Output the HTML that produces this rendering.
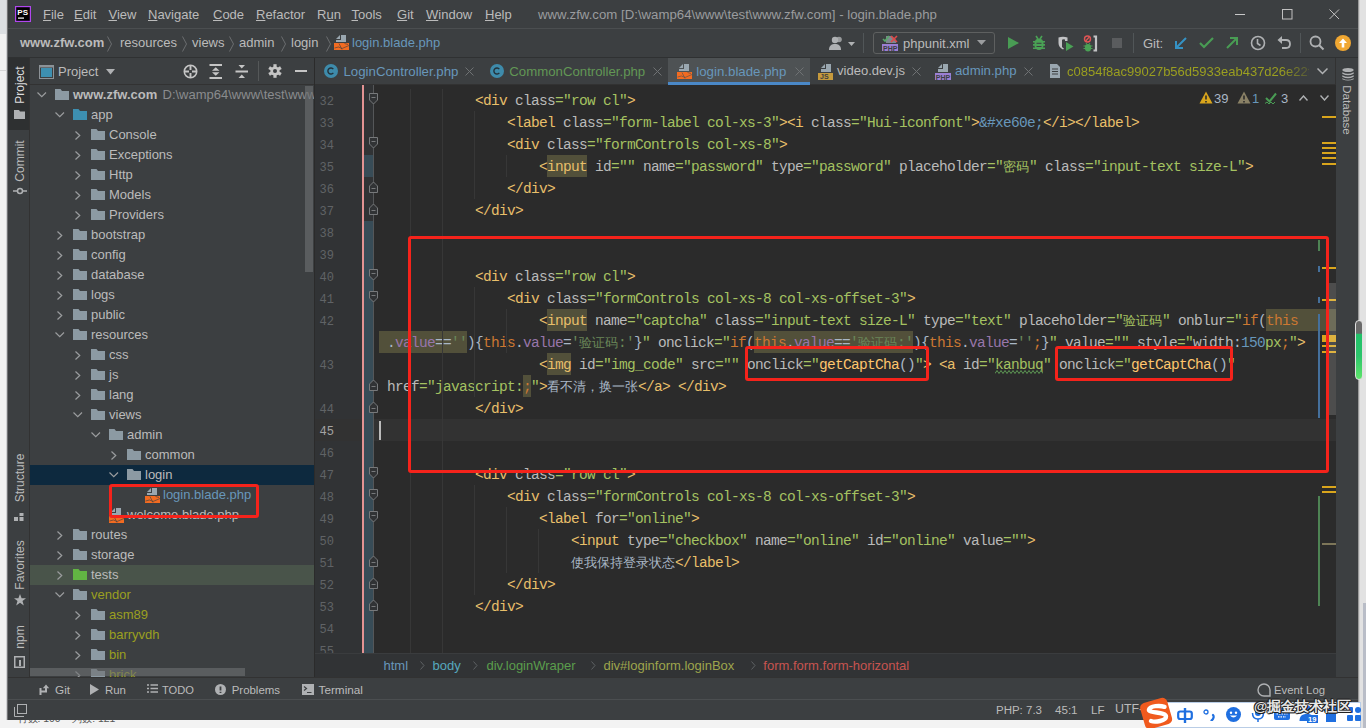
<!DOCTYPE html><html><head><meta charset="utf-8"><style>
html,body{margin:0;padding:0}
body{width:1366px;height:728px;overflow:hidden;position:relative;background:#e9eaec;font-family:"Liberation Sans", sans-serif}
.a{position:absolute}
.t{white-space:pre}
.cd{font-family:"Liberation Mono",monospace;font-size:14.5px;letter-spacing:-0.7px;line-height:22px;padding-top:1.1px}
.ln{font-family:"Liberation Mono",monospace;font-size:12px;line-height:22px;text-align:right;padding-top:2px}
.cj{font-size:13px;line-height:22px;padding-top:1px}
</style></head><body>
<div class="a" style="left:0px;top:0px;width:8px;height:728px;background:#f1f1f1;"></div><div class="a" style="left:0px;top:0px;width:8px;height:34px;background:#dcdfe2;"></div><div class="a" style="left:0px;top:70px;width:8px;height:1px;background:#d6d6d6;"></div><div class="a" style="left:0px;top:720px;width:1366px;height:8px;background:#f3f3f3;"></div><div class="a" style="left:1358px;top:0px;width:8px;height:728px;background:#e2e2e2;"></div><div class="a" style="left:1358px;top:0px;width:1px;height:728px;background:#9a9a9a;"></div><div class="a" style="left:1359px;top:0px;width:1px;height:728px;background:#cfcfcf;"></div><div class="a" style="left:1363px;top:603px;width:3px;height:125px;background:#b9bdc7;"></div><div class="a" style="left:8px;top:0px;width:1350px;height:720px;background:#3c3f41;"></div><div class="a" style="left:7px;top:0px;width:1px;height:720px;background:#707173;"></div><div class="a" style="left:6px;top:0px;width:1px;height:720px;background:#d0d1d3;"></div><div class="a" style="left:8px;top:28px;width:1350px;height:1px;background:#4b4e50;"></div><svg class="a" style="left:15px;top:6px;" width="16" height="16" viewBox="0 0 16 16"><rect x="0.6" y="0.6" width="14.8" height="14.8" fill="#000" stroke="#b047ee" stroke-width="1.2"/><text x="2.3" y="9" font-family="Liberation Sans" font-weight="bold" font-size="8" fill="#fff">PS</text><rect x="3" y="11.5" width="6" height="1.2" fill="#fff"/></svg><div class="a t" style="left:43px;top:6.50px;line-height:16px;font-size:13px;color:#bbbbbb;font-weight:normal;font-family:"Liberation Sans", sans-serif;text-underline-offset:1.5px;"><u>F</u>ile</div><div class="a t" style="left:74px;top:6.50px;line-height:16px;font-size:13px;color:#bbbbbb;font-weight:normal;font-family:"Liberation Sans", sans-serif;text-underline-offset:1.5px;"><u>E</u>dit</div><div class="a t" style="left:108.5px;top:6.50px;line-height:16px;font-size:13px;color:#bbbbbb;font-weight:normal;font-family:"Liberation Sans", sans-serif;text-underline-offset:1.5px;"><u>V</u>iew</div><div class="a t" style="left:148px;top:6.50px;line-height:16px;font-size:13px;color:#bbbbbb;font-weight:normal;font-family:"Liberation Sans", sans-serif;text-underline-offset:1.5px;"><u>N</u>avigate</div><div class="a t" style="left:213px;top:6.50px;line-height:16px;font-size:13px;color:#bbbbbb;font-weight:normal;font-family:"Liberation Sans", sans-serif;text-underline-offset:1.5px;"><u>C</u>ode</div><div class="a t" style="left:256px;top:6.50px;line-height:16px;font-size:13px;color:#bbbbbb;font-weight:normal;font-family:"Liberation Sans", sans-serif;text-underline-offset:1.5px;"><u>R</u>efactor</div><div class="a t" style="left:317px;top:6.50px;line-height:16px;font-size:13px;color:#bbbbbb;font-weight:normal;font-family:"Liberation Sans", sans-serif;text-underline-offset:1.5px;">R<u>u</u>n</div><div class="a t" style="left:351.5px;top:6.50px;line-height:16px;font-size:13px;color:#bbbbbb;font-weight:normal;font-family:"Liberation Sans", sans-serif;text-underline-offset:1.5px;"><u>T</u>ools</div><div class="a t" style="left:397px;top:6.50px;line-height:16px;font-size:13px;color:#bbbbbb;font-weight:normal;font-family:"Liberation Sans", sans-serif;text-underline-offset:1.5px;"><u>G</u>it</div><div class="a t" style="left:426px;top:6.50px;line-height:16px;font-size:13px;color:#bbbbbb;font-weight:normal;font-family:"Liberation Sans", sans-serif;text-underline-offset:1.5px;"><u>W</u>indow</div><div class="a t" style="left:485px;top:6.50px;line-height:16px;font-size:13px;color:#bbbbbb;font-weight:normal;font-family:"Liberation Sans", sans-serif;text-underline-offset:1.5px;"><u>H</u>elp</div><div class="a t" style="left:538px;top:5.92px;line-height:17px;font-size:13.22px;color:#9a9c9e;font-weight:normal;font-family:"Liberation Sans", sans-serif;">www.zfw.com [D:\wamp64\www\test\www.zfw.com] - login.blade.php</div><div class="a" style="left:1235px;top:14px;width:10px;height:1px;background:#c8c8c8;"></div><svg class="a" style="left:1282px;top:9px;" width="11" height="11" viewBox="0 0 11 11"><rect x="0.5" y="0.5" width="9.5" height="9.5" fill="none" stroke="#c0c0c0" stroke-width="1"/></svg><svg class="a" style="left:1329px;top:9px;" width="11" height="11" viewBox="0 0 11 11"><path d="M0.5 0.5L10 10M10 0.5L0.5 10" stroke="#c0c0c0" stroke-width="1"/></svg><div class="a" style="left:8px;top:57px;width:1350px;height:1px;background:#2f3132;"></div><div class="a t" style="left:20px;top:34.50px;line-height:16px;font-size:13px;color:#bbbbbb;font-weight:bold;font-family:"Liberation Sans", sans-serif;">www.zfw.com</div><svg class="a" style="left:107px;top:36px;" width="6" height="16" viewBox="0 0 6 16"><path d="M0.5 0.5L4.5 8L0.5 15.5" fill="none" stroke="#6b6e70" stroke-width="1"/></svg><svg class="a" style="left:182px;top:36px;" width="6" height="16" viewBox="0 0 6 16"><path d="M0.5 0.5L4.5 8L0.5 15.5" fill="none" stroke="#6b6e70" stroke-width="1"/></svg><svg class="a" style="left:229px;top:36px;" width="6" height="16" viewBox="0 0 6 16"><path d="M0.5 0.5L4.5 8L0.5 15.5" fill="none" stroke="#6b6e70" stroke-width="1"/></svg><svg class="a" style="left:281px;top:36px;" width="6" height="16" viewBox="0 0 6 16"><path d="M0.5 0.5L4.5 8L0.5 15.5" fill="none" stroke="#6b6e70" stroke-width="1"/></svg><svg class="a" style="left:326px;top:36px;" width="6" height="16" viewBox="0 0 6 16"><path d="M0.5 0.5L4.5 8L0.5 15.5" fill="none" stroke="#6b6e70" stroke-width="1"/></svg><div class="a t" style="left:120px;top:34.50px;line-height:16px;font-size:13px;color:#bbbbbb;font-weight:normal;font-family:"Liberation Sans", sans-serif;">resources</div><div class="a t" style="left:192px;top:34.50px;line-height:16px;font-size:13px;color:#bbbbbb;font-weight:normal;font-family:"Liberation Sans", sans-serif;">views</div><div class="a t" style="left:239px;top:34.50px;line-height:16px;font-size:13px;color:#bbbbbb;font-weight:normal;font-family:"Liberation Sans", sans-serif;">admin</div><div class="a t" style="left:291px;top:34.50px;line-height:16px;font-size:13px;color:#bbbbbb;font-weight:normal;font-family:"Liberation Sans", sans-serif;">login</div><svg class="a" style="left:334px;top:35px;" width="16" height="16" viewBox="0 0 16 16"><path d="M2 4L6 0V4Z" fill="#9aa7b0"/><path d="M7 0H12V7H2V5H7Z" fill="#9aa7b0"/><rect x="0" y="8" width="15" height="7" fill="#f26b21"/><path d="M0.5 13L4.5 12L8 13.5L15 10.5" fill="none" stroke="#3c3f41" stroke-width="0.8" opacity="0.8"/><path d="M5 8.5L8 14.5M10.5 8.5L14 9.5" fill="none" stroke="#3c3f41" stroke-width="0.8" opacity="0.8"/></svg><div class="a t" style="left:352px;top:34.50px;line-height:16px;font-size:13px;color:#6897bb;font-weight:normal;font-family:"Liberation Sans", sans-serif;">login.blade.php</div><svg class="a" style="left:829px;top:36px;" width="28" height="16" viewBox="0 0 28 16"><circle cx="6" cy="4" r="3.2" fill="#afb1b3"/><path d="M0 14C0 9 3 8 6 8C9 8 12 9 12 14Z" fill="#afb1b3"/><circle cx="10" cy="3.5" r="2.8" fill="#afb1b3" opacity="0.8"/><path d="M19 6H26L22.5 10Z" fill="#afb1b3"/></svg><div class="a" style="left:863px;top:33px;width:1px;height:20px;background:#515658;"></div><div class="a" style="left:873px;top:32px;width:120px;height:20px;border:1px solid #5e6060;border-radius:3px;"></div><svg class="a" style="left:882px;top:35px;" width="17" height="17" viewBox="0 0 17 17"><path d="M4 1H10L14 5V8H4Z" fill="#9aa7b0" opacity="0.7"/><rect x="0" y="9" width="16" height="7" fill="#9b7fd4"/><text x="1" y="15.5" font-family="Liberation Sans" font-weight="bold" font-size="7" fill="#3c3f41">PHP</text><path d="M1 4L3 6L7 1" fill="none" stroke="#59a869" stroke-width="1.6"/><path d="M9 1L15 7M15 1L9 7" stroke="#e04848" stroke-width="1.6"/></svg><div class="a t" style="left:903px;top:35.50px;line-height:16px;font-size:13px;color:#bbbbbb;font-weight:normal;font-family:"Liberation Sans", sans-serif;">phpunit.xml</div><svg class="a" style="left:977px;top:40px;" width="9" height="6" viewBox="0 0 9 6"><path d="M0 0H9L4.5 5Z" fill="#9b9d9f"/></svg><svg class="a" style="left:1008px;top:37px;" width="11" height="12" viewBox="0 0 11 12"><path d="M0 0L11 6L0 12Z" fill="#499c54"/></svg><svg class="a" style="left:1032px;top:35px;" width="14" height="16" viewBox="0 0 14 16"><path d="M4 1L6 4M10 1L8 4" stroke="#4aa155" stroke-width="1.6"/><rect x="2.5" y="3.5" width="9" height="11.5" rx="4.5" fill="#4aa155"/><path d="M1 6.7H13M1 9.9H13M1 13.3H13" stroke="#4aa155" stroke-width="1.6"/><path d="M4.5 8.3H9.5M4.5 11.5H9.5" stroke="#3c3f41" stroke-width="1"/></svg><svg class="a" style="left:1058px;top:36px;" width="16" height="16" viewBox="0 0 16 16"><path d="M0.5 1.5Q5 0 9.5 1.5V5H7V3.5Q5 3 4 3.8V11L6 12.8L5 13.5Q0.5 11 0.5 7Z" fill="#c2c3c5"/><path d="M8 6L15.5 10.5L8 15Z" fill="#4aa155"/></svg><svg class="a" style="left:1083px;top:35px;" width="16" height="17" viewBox="0 0 16 17"><circle cx="4.5" cy="4" r="3" fill="none" stroke="#e05555" stroke-width="1.4"/><path d="M2.7 6L6.3 2" stroke="#e05555" stroke-width="1.2"/><path d="M3 8L4 9.5M7 8L6 9.5" stroke="#4aa155" stroke-width="1"/><rect x="2" y="9" width="6" height="7.5" rx="3" fill="#4aa155"/><path d="M0.5 11H9.5M0.5 13.5H9.5" stroke="#4aa155" stroke-width="1.2"/><path d="M10.5 1.5H13V15.5H10.5" fill="none" stroke="#c2c3c5" stroke-width="2.2"/></svg><div class="a" style="left:1112px;top:38px;width:10px;height:10px;background:#5a5c5e;"></div><div class="a" style="left:1133px;top:33px;width:1px;height:20px;background:#515658;"></div><div class="a t" style="left:1143px;top:35.50px;line-height:16px;font-size:13px;color:#bbbbbb;font-weight:normal;font-family:"Liberation Sans", sans-serif;">Git:</div><svg class="a" style="left:1174px;top:36px;" width="14" height="14" viewBox="0 0 14 14"><path d="M12 2L2 12M2 5V12H9" fill="none" stroke="#3592c4" stroke-width="2"/></svg><svg class="a" style="left:1199px;top:37px;" width="15" height="12" viewBox="0 0 15 12"><path d="M1 6L5 10L14 1" fill="none" stroke="#499c54" stroke-width="2.2"/></svg><svg class="a" style="left:1225px;top:36px;" width="14" height="14" viewBox="0 0 14 14"><path d="M2 12L12 2M5 2H12V9" fill="none" stroke="#499c54" stroke-width="2"/></svg><svg class="a" style="left:1250px;top:35px;" width="16" height="16" viewBox="0 0 16 16"><circle cx="8" cy="8" r="6.5" fill="none" stroke="#afb1b3" stroke-width="1.6"/><path d="M7.5 4V8.5L10.5 10.5" fill="none" stroke="#afb1b3" stroke-width="1.6"/></svg><svg class="a" style="left:1277px;top:35px;" width="15" height="15" viewBox="0 0 15 15"><path d="M3 5H9C12 5 13 7 13 9C13 11 12 13 9 13H5" fill="none" stroke="#afb1b3" stroke-width="1.8"/><path d="M0.5 5L5 1V9Z" fill="#afb1b3"/></svg><div class="a" style="left:1300px;top:33px;width:1px;height:20px;background:#515658;"></div><svg class="a" style="left:1309px;top:35px;" width="16" height="16" viewBox="0 0 16 16"><circle cx="6.5" cy="6.5" r="5" fill="none" stroke="#afb1b3" stroke-width="1.8"/><path d="M10 10L14.5 14.5" stroke="#afb1b3" stroke-width="2"/></svg><svg class="a" style="left:1335px;top:35px;" width="16" height="16" viewBox="0 0 16 16"><circle cx="8" cy="8" r="8" fill="#f0a732"/><path d="M8 3.5L12 8H9.3V12.5H6.7V8H4Z" fill="#fff"/></svg><div class="a" style="left:8px;top:58px;width:22px;height:619px;background:#3c3f41;"></div><div class="a" style="left:8px;top:58px;width:21px;height:72px;background:#2e3031;"></div><div class="a" style="left:29px;top:58px;width:1px;height:619px;background:#323232;"></div><div class="a t" style="left:20px;top:84.5px;font-size:12px;line-height:14px;color:#dddddd;transform:translate(-50%,-50%) rotate(-90deg);">Project</div><svg class="a" style="left:14px;top:110px;" width="12" height="9" viewBox="0 0 12 9"><path d="M0 0H5L6 1.5H11V9H0Z" fill="#afb1b3"/></svg><div class="a t" style="left:20px;top:160.5px;font-size:12px;line-height:14px;color:#bbbbbb;transform:translate(-50%,-50%) rotate(-90deg);">Commit</div><svg class="a" style="left:13px;top:187px;" width="14" height="8" viewBox="0 0 14 8"><circle cx="7" cy="4" r="2.5" fill="none" stroke="#afb1b3" stroke-width="1.5"/><path d="M0 4H4.5M9.5 4H14" stroke="#afb1b3" stroke-width="1.5"/></svg><div class="a t" style="left:20px;top:478px;font-size:12px;line-height:14px;color:#bbbbbb;transform:translate(-50%,-50%) rotate(-90deg);">Structure</div><svg class="a" style="left:14px;top:513px;" width="11" height="8" viewBox="0 0 11 8"><rect x="0" y="4" width="4" height="4" fill="#afb1b3"/><rect x="5.5" y="4" width="4" height="4" fill="#afb1b3"/><rect x="5.5" y="0" width="4" height="3" fill="#afb1b3"/></svg><div class="a t" style="left:20px;top:565px;font-size:12px;line-height:14px;color:#bbbbbb;transform:translate(-50%,-50%) rotate(-90deg);">Favorites</div><svg class="a" style="left:14px;top:594px;" width="12" height="12" viewBox="0 0 12 12"><path d="M6 0L7.6 4.2H12L8.5 7L9.8 11.5L6 8.8L2.2 11.5L3.5 7L0 4.2H4.4Z" fill="#afb1b3"/></svg><div class="a t" style="left:20px;top:637px;font-size:12px;line-height:14px;color:#bbbbbb;transform:translate(-50%,-50%) rotate(-90deg);">npm</div><svg class="a" style="left:14px;top:656px;" width="11" height="12" viewBox="0 0 11 12"><rect x="0.75" y="0.75" width="9.5" height="10.5" fill="none" stroke="#afb1b3" stroke-width="1.5"/><rect x="5" y="4" width="2" height="6" fill="#afb1b3"/></svg><div class="a" style="left:30px;top:58px;width:284px;height:619px;background:#3c3f41;"></div><div class="a" style="left:30px;top:84px;width:284px;height:1px;background:#323232;"></div><div class="a" style="left:314px;top:58px;width:1px;height:620px;background:#2b2b2b;"></div><svg class="a" style="left:39px;top:65px;" width="15" height="14" viewBox="0 0 15 14"><rect x="0.5" y="0.5" width="14" height="13" fill="none" stroke="#8c9297" stroke-width="1"/><rect x="2" y="3" width="11" height="9" fill="#3d8fb0"/><rect x="1" y="1" width="13" height="1.5" fill="#8c9297"/></svg><div class="a t" style="left:58px;top:63.50px;line-height:16px;font-size:13px;color:#bbbbbb;font-weight:normal;font-family:"Liberation Sans", sans-serif;">Project</div><svg class="a" style="left:106px;top:69px;" width="10" height="6" viewBox="0 0 10 6"><path d="M0 0H9L4.5 5.5Z" fill="#afb1b3"/></svg><svg class="a" style="left:183px;top:64px;" width="15" height="15" viewBox="0 0 15 15"><circle cx="7.5" cy="7.5" r="6.2" fill="none" stroke="#c5c5c5" stroke-width="1.6"/><path d="M7.5 1V6M7.5 9V14M1 7.5H6M9 7.5H14" stroke="#c5c5c5" stroke-width="1.9"/></svg><svg class="a" style="left:209px;top:64px;" width="14" height="15" viewBox="0 0 14 15"><rect x="0.5" y="0" width="12.5" height="2" fill="#c5c5c5"/><rect x="0.5" y="13" width="12.5" height="2" fill="#c5c5c5"/><path d="M3 6.7L6.75 3.2L10.5 6.7Z M3 8.3L6.75 11.8L10.5 8.3Z" fill="#c5c5c5"/></svg><svg class="a" style="left:235px;top:64px;" width="14" height="15" viewBox="0 0 14 15"><rect x="0.5" y="6.5" width="12.5" height="2" fill="#c5c5c5"/><path d="M3.5 1L6.75 4.5L10 1Z M3.5 14L6.75 10.5L10 14Z" fill="#c5c5c5"/></svg><div class="a" style="left:258px;top:61px;width:1px;height:20px;background:#555859;"></div><svg class="a" style="left:268px;top:64px;" width="14" height="14" viewBox="0 0 14 14"><g transform="translate(7,7)"><circle r="4.6" fill="#c5c5c5"/><rect x="-1.6" y="-6.8" width="3.2" height="3.5" fill="#c5c5c5" transform="rotate(0)"/><rect x="-1.6" y="-6.8" width="3.2" height="3.5" fill="#c5c5c5" transform="rotate(60)"/><rect x="-1.6" y="-6.8" width="3.2" height="3.5" fill="#c5c5c5" transform="rotate(120)"/><rect x="-1.6" y="-6.8" width="3.2" height="3.5" fill="#c5c5c5" transform="rotate(180)"/><rect x="-1.6" y="-6.8" width="3.2" height="3.5" fill="#c5c5c5" transform="rotate(240)"/><rect x="-1.6" y="-6.8" width="3.2" height="3.5" fill="#c5c5c5" transform="rotate(300)"/><circle r="2" fill="#3c3f41"/></g></svg><div class="a" style="left:295px;top:70px;width:12px;height:2px;background:#c5c5c5;"></div><div class="a" style="left:30px;top:85px;width:284px;height:592px;overflow:hidden"><svg class="a" style="left:7.00px;top:7.00px;" width="10" height="6" viewBox="0 0 10 6"><path d="M0.5 0.5L4.75 4.75L9 0.5" fill="none" stroke="#9a9c9e" stroke-width="1.2"/></svg><svg class="a" style="left:25.00px;top:4.00px;" width="14" height="11" viewBox="0 0 14 11"><path d="M0 0H5.5L7 2H14V11H0Z" fill="#8c9aa3"/></svg><div class="a t" style="left:43.00px;top:1.50px;line-height:16px;font-size:13px;color:#bbbbbb;font-weight:bold;font-family:"Liberation Sans", sans-serif;">www.zfw.com</div><div class="a t" style="left:132.50px;top:1.50px;line-height:16px;font-size:13px;color:#8a8c8e;font-weight:normal;font-family:"Liberation Sans", sans-serif;">D:\wamp64\www\test\www.zfw.com</div><svg class="a" style="left:25.00px;top:27.00px;" width="10" height="6" viewBox="0 0 10 6"><path d="M0.5 0.5L4.75 4.75L9 0.5" fill="none" stroke="#9a9c9e" stroke-width="1.2"/></svg><svg class="a" style="left:43.00px;top:24.00px;" width="14" height="11" viewBox="0 0 14 11"><path d="M0 0H5.5L7 2H14V11H0Z" fill="#3d8fb0"/></svg><div class="a t" style="left:61.00px;top:21.50px;line-height:16px;font-size:13px;color:#bbbbbb;font-weight:normal;font-family:"Liberation Sans", sans-serif;">app</div><svg class="a" style="left:44.50px;top:46.00px;" width="6" height="10" viewBox="0 0 6 10"><path d="M0.5 0.5L4.75 4.5L0.5 8.5" fill="none" stroke="#9a9c9e" stroke-width="1.2"/></svg><svg class="a" style="left:61.00px;top:44.00px;" width="14" height="11" viewBox="0 0 14 11"><path d="M0 0H5.5L7 2H14V11H0Z" fill="#8c9aa3"/></svg><div class="a t" style="left:79.00px;top:41.50px;line-height:16px;font-size:13px;color:#bbbbbb;font-weight:normal;font-family:"Liberation Sans", sans-serif;">Console</div><svg class="a" style="left:44.50px;top:66.00px;" width="6" height="10" viewBox="0 0 6 10"><path d="M0.5 0.5L4.75 4.5L0.5 8.5" fill="none" stroke="#9a9c9e" stroke-width="1.2"/></svg><svg class="a" style="left:61.00px;top:64.00px;" width="14" height="11" viewBox="0 0 14 11"><path d="M0 0H5.5L7 2H14V11H0Z" fill="#8c9aa3"/></svg><div class="a t" style="left:79.00px;top:61.50px;line-height:16px;font-size:13px;color:#bbbbbb;font-weight:normal;font-family:"Liberation Sans", sans-serif;">Exceptions</div><svg class="a" style="left:44.50px;top:86.00px;" width="6" height="10" viewBox="0 0 6 10"><path d="M0.5 0.5L4.75 4.5L0.5 8.5" fill="none" stroke="#9a9c9e" stroke-width="1.2"/></svg><svg class="a" style="left:61.00px;top:84.00px;" width="14" height="11" viewBox="0 0 14 11"><path d="M0 0H5.5L7 2H14V11H0Z" fill="#8c9aa3"/></svg><div class="a t" style="left:79.00px;top:81.50px;line-height:16px;font-size:13px;color:#bbbbbb;font-weight:normal;font-family:"Liberation Sans", sans-serif;">Http</div><svg class="a" style="left:44.50px;top:106.00px;" width="6" height="10" viewBox="0 0 6 10"><path d="M0.5 0.5L4.75 4.5L0.5 8.5" fill="none" stroke="#9a9c9e" stroke-width="1.2"/></svg><svg class="a" style="left:61.00px;top:104.00px;" width="14" height="11" viewBox="0 0 14 11"><path d="M0 0H5.5L7 2H14V11H0Z" fill="#8c9aa3"/></svg><div class="a t" style="left:79.00px;top:101.50px;line-height:16px;font-size:13px;color:#bbbbbb;font-weight:normal;font-family:"Liberation Sans", sans-serif;">Models</div><svg class="a" style="left:44.50px;top:126.00px;" width="6" height="10" viewBox="0 0 6 10"><path d="M0.5 0.5L4.75 4.5L0.5 8.5" fill="none" stroke="#9a9c9e" stroke-width="1.2"/></svg><svg class="a" style="left:61.00px;top:124.00px;" width="14" height="11" viewBox="0 0 14 11"><path d="M0 0H5.5L7 2H14V11H0Z" fill="#8c9aa3"/></svg><div class="a t" style="left:79.00px;top:121.50px;line-height:16px;font-size:13px;color:#bbbbbb;font-weight:normal;font-family:"Liberation Sans", sans-serif;">Providers</div><svg class="a" style="left:26.50px;top:146.00px;" width="6" height="10" viewBox="0 0 6 10"><path d="M0.5 0.5L4.75 4.5L0.5 8.5" fill="none" stroke="#9a9c9e" stroke-width="1.2"/></svg><svg class="a" style="left:43.00px;top:144.00px;" width="14" height="11" viewBox="0 0 14 11"><path d="M0 0H5.5L7 2H14V11H0Z" fill="#8c9aa3"/></svg><div class="a t" style="left:61.00px;top:141.50px;line-height:16px;font-size:13px;color:#bbbbbb;font-weight:normal;font-family:"Liberation Sans", sans-serif;">bootstrap</div><svg class="a" style="left:26.50px;top:166.00px;" width="6" height="10" viewBox="0 0 6 10"><path d="M0.5 0.5L4.75 4.5L0.5 8.5" fill="none" stroke="#9a9c9e" stroke-width="1.2"/></svg><svg class="a" style="left:43.00px;top:164.00px;" width="14" height="11" viewBox="0 0 14 11"><path d="M0 0H5.5L7 2H14V11H0Z" fill="#8c9aa3"/></svg><div class="a t" style="left:61.00px;top:161.50px;line-height:16px;font-size:13px;color:#bbbbbb;font-weight:normal;font-family:"Liberation Sans", sans-serif;">config</div><svg class="a" style="left:26.50px;top:186.00px;" width="6" height="10" viewBox="0 0 6 10"><path d="M0.5 0.5L4.75 4.5L0.5 8.5" fill="none" stroke="#9a9c9e" stroke-width="1.2"/></svg><svg class="a" style="left:43.00px;top:184.00px;" width="14" height="11" viewBox="0 0 14 11"><path d="M0 0H5.5L7 2H14V11H0Z" fill="#8c9aa3"/></svg><div class="a t" style="left:61.00px;top:181.50px;line-height:16px;font-size:13px;color:#bbbbbb;font-weight:normal;font-family:"Liberation Sans", sans-serif;">database</div><svg class="a" style="left:26.50px;top:206.00px;" width="6" height="10" viewBox="0 0 6 10"><path d="M0.5 0.5L4.75 4.5L0.5 8.5" fill="none" stroke="#9a9c9e" stroke-width="1.2"/></svg><svg class="a" style="left:43.00px;top:204.00px;" width="14" height="11" viewBox="0 0 14 11"><path d="M0 0H5.5L7 2H14V11H0Z" fill="#8c9aa3"/></svg><div class="a t" style="left:61.00px;top:201.50px;line-height:16px;font-size:13px;color:#bbbbbb;font-weight:normal;font-family:"Liberation Sans", sans-serif;">logs</div><svg class="a" style="left:26.50px;top:226.00px;" width="6" height="10" viewBox="0 0 6 10"><path d="M0.5 0.5L4.75 4.5L0.5 8.5" fill="none" stroke="#9a9c9e" stroke-width="1.2"/></svg><svg class="a" style="left:43.00px;top:224.00px;" width="14" height="11" viewBox="0 0 14 11"><path d="M0 0H5.5L7 2H14V11H0Z" fill="#8c9aa3"/></svg><div class="a t" style="left:61.00px;top:221.50px;line-height:16px;font-size:13px;color:#bbbbbb;font-weight:normal;font-family:"Liberation Sans", sans-serif;">public</div><svg class="a" style="left:25.00px;top:247.00px;" width="10" height="6" viewBox="0 0 10 6"><path d="M0.5 0.5L4.75 4.75L9 0.5" fill="none" stroke="#9a9c9e" stroke-width="1.2"/></svg><svg class="a" style="left:43.00px;top:244.00px;" width="14" height="11" viewBox="0 0 14 11"><path d="M0 0H5.5L7 2H14V11H0Z" fill="#8c9aa3"/></svg><div class="a t" style="left:61.00px;top:241.50px;line-height:16px;font-size:13px;color:#bbbbbb;font-weight:normal;font-family:"Liberation Sans", sans-serif;">resources</div><svg class="a" style="left:44.50px;top:266.00px;" width="6" height="10" viewBox="0 0 6 10"><path d="M0.5 0.5L4.75 4.5L0.5 8.5" fill="none" stroke="#9a9c9e" stroke-width="1.2"/></svg><svg class="a" style="left:61.00px;top:264.00px;" width="14" height="11" viewBox="0 0 14 11"><path d="M0 0H5.5L7 2H14V11H0Z" fill="#8c9aa3"/></svg><div class="a t" style="left:79.00px;top:261.50px;line-height:16px;font-size:13px;color:#bbbbbb;font-weight:normal;font-family:"Liberation Sans", sans-serif;">css</div><svg class="a" style="left:44.50px;top:286.00px;" width="6" height="10" viewBox="0 0 6 10"><path d="M0.5 0.5L4.75 4.5L0.5 8.5" fill="none" stroke="#9a9c9e" stroke-width="1.2"/></svg><svg class="a" style="left:61.00px;top:284.00px;" width="14" height="11" viewBox="0 0 14 11"><path d="M0 0H5.5L7 2H14V11H0Z" fill="#8c9aa3"/></svg><div class="a t" style="left:79.00px;top:281.50px;line-height:16px;font-size:13px;color:#bbbbbb;font-weight:normal;font-family:"Liberation Sans", sans-serif;">js</div><svg class="a" style="left:44.50px;top:306.00px;" width="6" height="10" viewBox="0 0 6 10"><path d="M0.5 0.5L4.75 4.5L0.5 8.5" fill="none" stroke="#9a9c9e" stroke-width="1.2"/></svg><svg class="a" style="left:61.00px;top:304.00px;" width="14" height="11" viewBox="0 0 14 11"><path d="M0 0H5.5L7 2H14V11H0Z" fill="#8c9aa3"/></svg><div class="a t" style="left:79.00px;top:301.50px;line-height:16px;font-size:13px;color:#bbbbbb;font-weight:normal;font-family:"Liberation Sans", sans-serif;">lang</div><svg class="a" style="left:43.00px;top:327.00px;" width="10" height="6" viewBox="0 0 10 6"><path d="M0.5 0.5L4.75 4.75L9 0.5" fill="none" stroke="#9a9c9e" stroke-width="1.2"/></svg><svg class="a" style="left:61.00px;top:324.00px;" width="14" height="11" viewBox="0 0 14 11"><path d="M0 0H5.5L7 2H14V11H0Z" fill="#8c9aa3"/></svg><div class="a t" style="left:79.00px;top:321.50px;line-height:16px;font-size:13px;color:#bbbbbb;font-weight:normal;font-family:"Liberation Sans", sans-serif;">views</div><svg class="a" style="left:61.00px;top:347.00px;" width="10" height="6" viewBox="0 0 10 6"><path d="M0.5 0.5L4.75 4.75L9 0.5" fill="none" stroke="#9a9c9e" stroke-width="1.2"/></svg><svg class="a" style="left:79.00px;top:344.00px;" width="14" height="11" viewBox="0 0 14 11"><path d="M0 0H5.5L7 2H14V11H0Z" fill="#8c9aa3"/></svg><div class="a t" style="left:97.00px;top:341.50px;line-height:16px;font-size:13px;color:#bbbbbb;font-weight:normal;font-family:"Liberation Sans", sans-serif;">admin</div><svg class="a" style="left:80.50px;top:366.00px;" width="6" height="10" viewBox="0 0 6 10"><path d="M0.5 0.5L4.75 4.5L0.5 8.5" fill="none" stroke="#9a9c9e" stroke-width="1.2"/></svg><svg class="a" style="left:97.00px;top:364.00px;" width="14" height="11" viewBox="0 0 14 11"><path d="M0 0H5.5L7 2H14V11H0Z" fill="#8c9aa3"/></svg><div class="a t" style="left:115.00px;top:361.50px;line-height:16px;font-size:13px;color:#bbbbbb;font-weight:normal;font-family:"Liberation Sans", sans-serif;">common</div><div class="a" style="left:0.00px;top:380.00px;width:284px;height:20px;background:#0d293e;"></div><svg class="a" style="left:79.00px;top:387.00px;" width="10" height="6" viewBox="0 0 10 6"><path d="M0.5 0.5L4.75 4.75L9 0.5" fill="none" stroke="#9a9c9e" stroke-width="1.2"/></svg><svg class="a" style="left:97.00px;top:384.00px;" width="14" height="11" viewBox="0 0 14 11"><path d="M0 0H5.5L7 2H14V11H0Z" fill="#8c9aa3"/></svg><div class="a t" style="left:115.00px;top:381.50px;line-height:16px;font-size:13px;color:#bbbbbb;font-weight:normal;font-family:"Liberation Sans", sans-serif;">login</div><svg class="a" style="left:115.00px;top:403.00px;" width="16" height="16" viewBox="0 0 16 16"><path d="M2 4L6 0V4Z" fill="#9aa7b0"/><path d="M7 0H12V7H2V5H7Z" fill="#9aa7b0"/><rect x="0" y="8" width="15" height="7" fill="#f26b21"/><path d="M0.5 13L4.5 12L8 13.5L15 10.5" fill="none" stroke="#3c3f41" stroke-width="0.8" opacity="0.8"/><path d="M5 8.5L8 14.5M10.5 8.5L14 9.5" fill="none" stroke="#3c3f41" stroke-width="0.8" opacity="0.8"/></svg><div class="a t" style="left:133.00px;top:401.50px;line-height:16px;font-size:13px;color:#6897bb;font-weight:normal;font-family:"Liberation Sans", sans-serif;">login.blade.php</div><svg class="a" style="left:79.00px;top:423.00px;" width="16" height="16" viewBox="0 0 16 16"><path d="M2 4L6 0V4Z" fill="#9aa7b0"/><path d="M7 0H12V7H2V5H7Z" fill="#9aa7b0"/><rect x="0" y="8" width="15" height="7" fill="#f26b21"/><path d="M0.5 13L4.5 12L8 13.5L15 10.5" fill="none" stroke="#3c3f41" stroke-width="0.8" opacity="0.8"/><path d="M5 8.5L8 14.5M10.5 8.5L14 9.5" fill="none" stroke="#3c3f41" stroke-width="0.8" opacity="0.8"/></svg><div class="a t" style="left:97.00px;top:421.50px;line-height:16px;font-size:13px;color:#bbbbbb;font-weight:normal;font-family:"Liberation Sans", sans-serif;">welcome.blade.php</div><svg class="a" style="left:26.50px;top:446.00px;" width="6" height="10" viewBox="0 0 6 10"><path d="M0.5 0.5L4.75 4.5L0.5 8.5" fill="none" stroke="#9a9c9e" stroke-width="1.2"/></svg><svg class="a" style="left:43.00px;top:444.00px;" width="14" height="11" viewBox="0 0 14 11"><path d="M0 0H5.5L7 2H14V11H0Z" fill="#8c9aa3"/></svg><div class="a t" style="left:61.00px;top:441.50px;line-height:16px;font-size:13px;color:#bbbbbb;font-weight:normal;font-family:"Liberation Sans", sans-serif;">routes</div><svg class="a" style="left:26.50px;top:466.00px;" width="6" height="10" viewBox="0 0 6 10"><path d="M0.5 0.5L4.75 4.5L0.5 8.5" fill="none" stroke="#9a9c9e" stroke-width="1.2"/></svg><svg class="a" style="left:43.00px;top:464.00px;" width="14" height="11" viewBox="0 0 14 11"><path d="M0 0H5.5L7 2H14V11H0Z" fill="#8c9aa3"/></svg><div class="a t" style="left:61.00px;top:461.50px;line-height:16px;font-size:13px;color:#bbbbbb;font-weight:normal;font-family:"Liberation Sans", sans-serif;">storage</div><div class="a" style="left:0.00px;top:480.00px;width:284px;height:20px;background:#49544a;"></div><svg class="a" style="left:26.50px;top:486.00px;" width="6" height="10" viewBox="0 0 6 10"><path d="M0.5 0.5L4.75 4.5L0.5 8.5" fill="none" stroke="#9a9c9e" stroke-width="1.2"/></svg><svg class="a" style="left:43.00px;top:484.00px;" width="14" height="11" viewBox="0 0 14 11"><path d="M0 0H5.5L7 2H14V11H0Z" fill="#62b543"/></svg><div class="a t" style="left:61.00px;top:481.50px;line-height:16px;font-size:13px;color:#bbbbbb;font-weight:normal;font-family:"Liberation Sans", sans-serif;">tests</div><svg class="a" style="left:25.00px;top:507.00px;" width="10" height="6" viewBox="0 0 10 6"><path d="M0.5 0.5L4.75 4.75L9 0.5" fill="none" stroke="#9a9c9e" stroke-width="1.2"/></svg><svg class="a" style="left:43.00px;top:504.00px;" width="14" height="11" viewBox="0 0 14 11"><path d="M0 0H5.5L7 2H14V11H0Z" fill="#8c9aa3"/></svg><div class="a t" style="left:61.00px;top:501.50px;line-height:16px;font-size:13px;color:#9b9f20;font-weight:normal;font-family:"Liberation Sans", sans-serif;">vendor</div><svg class="a" style="left:44.50px;top:526.00px;" width="6" height="10" viewBox="0 0 6 10"><path d="M0.5 0.5L4.75 4.5L0.5 8.5" fill="none" stroke="#9a9c9e" stroke-width="1.2"/></svg><svg class="a" style="left:61.00px;top:524.00px;" width="14" height="11" viewBox="0 0 14 11"><path d="M0 0H5.5L7 2H14V11H0Z" fill="#8c9aa3"/></svg><div class="a t" style="left:79.00px;top:521.50px;line-height:16px;font-size:13px;color:#9b9f20;font-weight:normal;font-family:"Liberation Sans", sans-serif;">asm89</div><svg class="a" style="left:44.50px;top:546.00px;" width="6" height="10" viewBox="0 0 6 10"><path d="M0.5 0.5L4.75 4.5L0.5 8.5" fill="none" stroke="#9a9c9e" stroke-width="1.2"/></svg><svg class="a" style="left:61.00px;top:544.00px;" width="14" height="11" viewBox="0 0 14 11"><path d="M0 0H5.5L7 2H14V11H0Z" fill="#8c9aa3"/></svg><div class="a t" style="left:79.00px;top:541.50px;line-height:16px;font-size:13px;color:#9b9f20;font-weight:normal;font-family:"Liberation Sans", sans-serif;">barryvdh</div><svg class="a" style="left:44.50px;top:566.00px;" width="6" height="10" viewBox="0 0 6 10"><path d="M0.5 0.5L4.75 4.5L0.5 8.5" fill="none" stroke="#9a9c9e" stroke-width="1.2"/></svg><svg class="a" style="left:61.00px;top:564.00px;" width="14" height="11" viewBox="0 0 14 11"><path d="M0 0H5.5L7 2H14V11H0Z" fill="#8c9aa3"/></svg><div class="a t" style="left:79.00px;top:561.50px;line-height:16px;font-size:13px;color:#9b9f20;font-weight:normal;font-family:"Liberation Sans", sans-serif;">bin</div><svg class="a" style="left:44.50px;top:586.00px;" width="6" height="10" viewBox="0 0 6 10"><path d="M0.5 0.5L4.75 4.5L0.5 8.5" fill="none" stroke="#9a9c9e" stroke-width="1.2"/></svg><svg class="a" style="left:61.00px;top:584.00px;" width="14" height="11" viewBox="0 0 14 11"><path d="M0 0H5.5L7 2H14V11H0Z" fill="#8c9aa3"/></svg><div class="a t" style="left:79.00px;top:581.50px;line-height:16px;font-size:13px;color:#9b9f20;font-weight:normal;font-family:"Liberation Sans", sans-serif;">brick</div><div class="a" style="left:275.00px;top:1.00px;width:8px;height:186px;background:rgba(110,113,115,0.6);"></div><div class="a" style="left:0.00px;top:583.00px;width:215px;height:8px;background:rgba(110,113,115,0.6);"></div></div><div class="a" style="left:109px;top:484px;width:144px;height:28px;border:3px solid #f5231b;border-radius:3px"></div><div class="a" style="left:315px;top:58px;width:1021px;height:26px;background:#3c3f41;"></div><div class="a" style="left:315px;top:84px;width:1021px;height:1px;background:#323232;"></div><svg class="a" style="left:324px;top:64px;" width="14" height="14" viewBox="0 0 14 14"><circle cx="7" cy="7" r="7" fill="#3e8bab"/><path d="M9.3 5.2A3 3 0 1 0 9.3 8.8" fill="none" stroke="#233038" stroke-width="1.4"/></svg><div class="a t" style="left:343.5px;top:62.91px;line-height:17px;font-size:13.26px;color:#6897bb;font-weight:normal;font-family:"Liberation Sans", sans-serif;">LoginController.php</div><svg class="a" style="left:465px;top:67px;" width="9" height="9" viewBox="0 0 9 9"><path d="M0.5 0.5L8.5 8.5M8.5 0.5L0.5 8.5" stroke="#6f7274" stroke-width="1"/></svg><svg class="a" style="left:490px;top:64px;" width="14" height="14" viewBox="0 0 14 14"><circle cx="7" cy="7" r="7" fill="#3e8bab"/><path d="M9.3 5.2A3 3 0 1 0 9.3 8.8" fill="none" stroke="#233038" stroke-width="1.4"/></svg><div class="a t" style="left:509.3px;top:62.92px;line-height:17px;font-size:13.23px;color:#629755;font-weight:normal;font-family:"Liberation Sans", sans-serif;">CommonController.php</div><svg class="a" style="left:653px;top:67px;" width="9" height="9" viewBox="0 0 9 9"><path d="M0.5 0.5L8.5 8.5M8.5 0.5L0.5 8.5" stroke="#6f7274" stroke-width="1"/></svg><div class="a" style="left:668px;top:58px;width:142px;height:26px;background:#4e5254;"></div><div class="a" style="left:668px;top:82px;width:142px;height:3px;background:#4a88c7;"></div><svg class="a" style="left:677px;top:64px;" width="16" height="16" viewBox="0 0 16 16"><path d="M2 4L6 0V4Z" fill="#9aa7b0"/><path d="M7 0H12V7H2V5H7Z" fill="#9aa7b0"/><rect x="0" y="8" width="15" height="7" fill="#f26b21"/><path d="M0.5 13L4.5 12L8 13.5L15 10.5" fill="none" stroke="#4e5254" stroke-width="0.8" opacity="0.8"/><path d="M5 8.5L8 14.5M10.5 8.5L14 9.5" fill="none" stroke="#4e5254" stroke-width="0.8" opacity="0.8"/></svg><div class="a t" style="left:696.3px;top:62.90px;line-height:17px;font-size:13.27px;color:#6897bb;font-weight:normal;font-family:"Liberation Sans", sans-serif;">login.blade.php</div><svg class="a" style="left:795px;top:67px;" width="9" height="9" viewBox="0 0 9 9"><path d="M0.5 0.5L8.5 8.5M8.5 0.5L0.5 8.5" stroke="#6f7274" stroke-width="1"/></svg><svg class="a" style="left:818px;top:64px;" width="16" height="17" viewBox="0 0 16 17"><path d="M3 4L7 0V4Z" fill="#9aa7b0"/><path d="M8 0H13V8H3V5H8Z" fill="#9aa7b0"/><rect x="0" y="9" width="15" height="7" fill="#c69a3c"/><text x="2" y="15.3" font-family="Liberation Sans" font-weight="bold" font-size="7" fill="#3c3f41">JS</text></svg><div class="a t" style="left:837px;top:63.47px;line-height:16px;font-size:13.06px;color:#bbbbbb;font-weight:normal;font-family:"Liberation Sans", sans-serif;">video.dev.js</div><svg class="a" style="left:912px;top:67px;" width="9" height="9" viewBox="0 0 9 9"><path d="M0.5 0.5L8.5 8.5M8.5 0.5L0.5 8.5" stroke="#6f7274" stroke-width="1"/></svg><svg class="a" style="left:935px;top:64px;" width="16" height="17" viewBox="0 0 16 17"><path d="M3 4L7 0V4Z" fill="#9aa7b0"/><path d="M8 0H13V8H3V5H8Z" fill="#9aa7b0"/><rect x="0" y="9" width="16" height="7" fill="#9b7fd4"/><text x="0.8" y="15.5" font-family="Liberation Sans" font-weight="bold" font-size="7" fill="#3c3f41">PHP</text></svg><div class="a t" style="left:955px;top:63.43px;line-height:16px;font-size:13.19px;color:#6897bb;font-weight:normal;font-family:"Liberation Sans", sans-serif;">admin.php</div><svg class="a" style="left:1024px;top:67px;" width="9" height="9" viewBox="0 0 9 9"><path d="M0.5 0.5L8.5 8.5M8.5 0.5L0.5 8.5" stroke="#6f7274" stroke-width="1"/></svg><svg class="a" style="left:1050px;top:64px;" width="11" height="14" viewBox="0 0 11 14"><path d="M0 0H7L10 3V14H0Z" fill="#9aa7b0"/><path d="M2 5H8M2 7.5H8M2 10H8" stroke="#3c3f41" stroke-width="1"/></svg><div class="a" style="left:1067px;top:58px;width:242px;height:26px;overflow:hidden;"><div class="a t" style="left:0;top:5.5px;line-height:16px;font-size:13px;color:#9b9f20;-webkit-mask-image:linear-gradient(to right,#000 85%,transparent 100%)">c0854f8ac99027b56d5933eab437d26e22f8</div></div><svg class="a" style="left:1317px;top:68px;" width="11" height="7" viewBox="0 0 11 7"><path d="M0.5 0.5L5.5 5.5L10.5 0.5" fill="none" stroke="#afb1b3" stroke-width="1.5"/></svg><div class="a" style="left:1336px;top:58px;width:22px;height:620px;background:#3c3f41;"></div><div class="a" style="left:1335px;top:58px;width:1px;height:620px;background:#323232;"></div><svg class="a" style="left:1342px;top:68px;" width="12" height="13" viewBox="0 0 12 13"><ellipse cx="6" cy="2" rx="5.7" ry="2" fill="#afb1b3"/><path d="M0.3 4.2Q6 7.2 11.7 4.2V5.8Q6 8.8 0.3 5.8Z" fill="#afb1b3"/><path d="M0.3 7.2Q6 10.2 11.7 7.2V8.8Q6 11.8 0.3 8.8Z" fill="#afb1b3"/><path d="M0.3 10.2Q6 13.2 11.7 10.2V11.2Q6 13.6 0.3 11.2Z" fill="#afb1b3"/></svg><div class="a t" style="left:1346.5px;top:109.5px;font-size:11.6px;line-height:14px;color:#bbbbbb;transform:translate(-50%,-50%) rotate(90deg);">Database</div><div class="a" style="left:315px;top:85px;width:1021px;height:568px;background:#2b2b2b;"></div><div class="a" style="left:315px;top:85px;width:59px;height:568px;background:#313335;"></div><div class="a" style="left:374px;top:419px;width:962px;height:22px;background:#323232;"></div><div class="a" style="left:315px;top:419px;width:59px;height:22px;background:#323232;"></div><div class="a" style="left:547px;top:155px;width:40px;height:22px;background:#52503a;"></div><div class="a" style="left:547px;top:309px;width:40px;height:22px;background:#52503a;"></div><div class="a" style="left:547px;top:353px;width:24px;height:22px;background:#52503a;"></div><div class="a" style="left:1266px;top:309px;width:70px;height:22px;background:#52503a;"></div><div class="a" style="left:379px;top:331px;width:88px;height:22px;background:#52503a;"></div><div class="a" style="left:754px;top:331px;width:159px;height:22px;background:#52503a;"></div><div class="a" style="left:523px;top:375px;width:8px;height:22px;background:#52503a;"></div><div class="a t cd" style="left:475px;top:89px;color:#e8bf6a">&lt;div</div><div class="a t cd" style="left:507px;top:89px;color:#bababa"> class</div><div class="a t cd" style="left:555px;top:89px;color:#a5c261">=&quot;row cl&quot;</div><div class="a t cd" style="left:627px;top:89px;color:#e8bf6a">&gt;</div><div class="a t cd" style="left:507px;top:111px;color:#e8bf6a">&lt;label</div><div class="a t cd" style="left:555px;top:111px;color:#bababa"> class</div><div class="a t cd" style="left:603px;top:111px;color:#a5c261">=&quot;form-label col-xs-3&quot;</div><div class="a t cd" style="left:779px;top:111px;color:#e8bf6a">&gt;&lt;i</div><div class="a t cd" style="left:803px;top:111px;color:#bababa"> class</div><div class="a t cd" style="left:851px;top:111px;color:#a5c261">=&quot;Hui-iconfont&quot;</div><div class="a t cd" style="left:971px;top:111px;color:#e8bf6a">&gt;</div><div class="a t cd" style="left:979px;top:111px;color:#6897bb">&amp;#xe60e;</div><div class="a t cd" style="left:1043px;top:111px;color:#e8bf6a">&lt;/i&gt;&lt;/label&gt;</div><div class="a t cd" style="left:507px;top:133px;color:#e8bf6a">&lt;div</div><div class="a t cd" style="left:539px;top:133px;color:#bababa"> class</div><div class="a t cd" style="left:587px;top:133px;color:#a5c261">=&quot;formControls col-xs-8&quot;</div><div class="a t cd" style="left:779px;top:133px;color:#e8bf6a">&gt;</div><div class="a t cd" style="left:539px;top:155px;color:#e8bf6a">&lt;input</div><div class="a t cd" style="left:587px;top:155px;color:#bababa"> id</div><div class="a t cd" style="left:611px;top:155px;color:#a5c261">=&quot;&quot;</div><div class="a t cd" style="left:635px;top:155px;color:#bababa"> name</div><div class="a t cd" style="left:675px;top:155px;color:#a5c261">=&quot;password&quot;</div><div class="a t cd" style="left:763px;top:155px;color:#bababa"> type</div><div class="a t cd" style="left:803px;top:155px;color:#a5c261">=&quot;password&quot;</div><div class="a t cd" style="left:891px;top:155px;color:#bababa"> placeholder</div><div class="a t cd" style="left:987px;top:155px;color:#a5c261">=&quot;</div><div class="a t cj" style="left:1003px;top:155px;color:#a5c261">密码</div><div class="a t cd" style="left:1029px;top:155px;color:#a5c261">&quot;</div><div class="a t cd" style="left:1037px;top:155px;color:#bababa"> class</div><div class="a t cd" style="left:1085px;top:155px;color:#a5c261">=&quot;input-text size-L&quot;</div><div class="a t cd" style="left:1245px;top:155px;color:#e8bf6a">&gt;</div><div class="a t cd" style="left:507px;top:177px;color:#e8bf6a">&lt;/div&gt;</div><div class="a t cd" style="left:475px;top:199px;color:#e8bf6a">&lt;/div&gt;</div><div class="a t cd" style="left:475px;top:265px;color:#e8bf6a">&lt;div</div><div class="a t cd" style="left:507px;top:265px;color:#bababa"> class</div><div class="a t cd" style="left:555px;top:265px;color:#a5c261">=&quot;row cl&quot;</div><div class="a t cd" style="left:627px;top:265px;color:#e8bf6a">&gt;</div><div class="a t cd" style="left:507px;top:287px;color:#e8bf6a">&lt;div</div><div class="a t cd" style="left:539px;top:287px;color:#bababa"> class</div><div class="a t cd" style="left:587px;top:287px;color:#a5c261">=&quot;formControls col-xs-8 col-xs-offset-3&quot;</div><div class="a t cd" style="left:907px;top:287px;color:#e8bf6a">&gt;</div><div class="a t cd" style="left:539px;top:309px;color:#e8bf6a">&lt;input</div><div class="a t cd" style="left:587px;top:309px;color:#bababa"> name</div><div class="a t cd" style="left:627px;top:309px;color:#a5c261">=&quot;captcha&quot;</div><div class="a t cd" style="left:707px;top:309px;color:#bababa"> class</div><div class="a t cd" style="left:755px;top:309px;color:#a5c261">=&quot;input-text size-L&quot;</div><div class="a t cd" style="left:915px;top:309px;color:#bababa"> type</div><div class="a t cd" style="left:955px;top:309px;color:#a5c261">=&quot;text&quot;</div><div class="a t cd" style="left:1011px;top:309px;color:#bababa"> placeholder</div><div class="a t cd" style="left:1107px;top:309px;color:#a5c261">=&quot;</div><div class="a t cj" style="left:1123px;top:309px;color:#a5c261">验证码</div><div class="a t cd" style="left:1162px;top:309px;color:#a5c261">&quot;</div><div class="a t cd" style="left:1170px;top:309px;color:#bababa"> onblur</div><div class="a t cd" style="left:1226px;top:309px;color:#a5c261">=&quot;</div><div class="a t cd" style="left:1242px;top:309px;color:#cc7832">if</div><div class="a t cd" style="left:1258px;top:309px;color:#a9b7c6">(</div><div class="a t cd" style="left:1266px;top:309px;color:#cc7832">this</div><div class="a t cd" style="left:387px;top:331px;color:#a9b7c6">.</div><div class="a t cd" style="left:395px;top:331px;color:#9876aa">value</div><div class="a t cd" style="left:435px;top:331px;color:#a9b7c6">==</div><div class="a t cd" style="left:451px;top:331px;color:#6a8759">&#x27;&#x27;</div><div class="a t cd" style="left:467px;top:331px;color:#a9b7c6">){</div><div class="a t cd" style="left:483px;top:331px;color:#cc7832">this</div><div class="a t cd" style="left:515px;top:331px;color:#a9b7c6">.</div><div class="a t cd" style="left:523px;top:331px;color:#9876aa">value</div><div class="a t cd" style="left:563px;top:331px;color:#a9b7c6">=</div><div class="a t cd" style="left:571px;top:331px;color:#6a8759">&#x27;</div><div class="a t cj" style="left:579px;top:331px;color:#6a8759">验证码</div><div class="a t cd" style="left:618px;top:331px;color:#6a8759">:&#x27;</div><div class="a t cd" style="left:634px;top:331px;color:#a9b7c6">}</div><div class="a t cd" style="left:642px;top:331px;color:#a5c261">&quot;</div><div class="a t cd" style="left:650px;top:331px;color:#bababa"> onclick</div><div class="a t cd" style="left:714px;top:331px;color:#a5c261">=&quot;</div><div class="a t cd" style="left:730px;top:331px;color:#cc7832">if</div><div class="a t cd" style="left:746px;top:331px;color:#a9b7c6">(</div><div class="a t cd" style="left:754px;top:331px;color:#cc7832">this</div><div class="a t cd" style="left:786px;top:331px;color:#a9b7c6">.</div><div class="a t cd" style="left:794px;top:331px;color:#9876aa">value</div><div class="a t cd" style="left:834px;top:331px;color:#a9b7c6">==</div><div class="a t cd" style="left:850px;top:331px;color:#6a8759">&#x27;</div><div class="a t cj" style="left:858px;top:331px;color:#6a8759">验证码</div><div class="a t cd" style="left:897px;top:331px;color:#6a8759">:&#x27;</div><div class="a t cd" style="left:913px;top:331px;color:#a9b7c6">){</div><div class="a t cd" style="left:929px;top:331px;color:#cc7832">this</div><div class="a t cd" style="left:961px;top:331px;color:#a9b7c6">.</div><div class="a t cd" style="left:969px;top:331px;color:#9876aa">value</div><div class="a t cd" style="left:1009px;top:331px;color:#a9b7c6">=</div><div class="a t cd" style="left:1017px;top:331px;color:#6a8759">&#x27;&#x27;</div><div class="a t cd" style="left:1033px;top:331px;color:#cc7832">;</div><div class="a t cd" style="left:1041px;top:331px;color:#a9b7c6">}</div><div class="a t cd" style="left:1049px;top:331px;color:#a5c261">&quot;</div><div class="a t cd" style="left:1057px;top:331px;color:#bababa"> value</div><div class="a t cd" style="left:1105px;top:331px;color:#a5c261">=&quot;&quot;</div><div class="a t cd" style="left:1129px;top:331px;color:#bababa"> style</div><div class="a t cd" style="left:1177px;top:331px;color:#a5c261">=&quot;</div><div class="a t cd" style="left:1193px;top:331px;color:#bababa">width</div><div class="a t cd" style="left:1233px;top:331px;color:#a9b7c6">:</div><div class="a t cd" style="left:1241px;top:331px;color:#6897bb">150</div><div class="a t cd" style="left:1265px;top:331px;color:#a5c261">px</div><div class="a t cd" style="left:1281px;top:331px;color:#cc7832">;</div><div class="a t cd" style="left:1289px;top:331px;color:#a5c261">&quot;</div><div class="a t cd" style="left:1297px;top:331px;color:#e8bf6a">&gt;</div><div class="a t cd" style="left:539px;top:353px;color:#e8bf6a">&lt;img</div><div class="a t cd" style="left:571px;top:353px;color:#bababa"> id</div><div class="a t cd" style="left:595px;top:353px;color:#a5c261">=&quot;img_code&quot;</div><div class="a t cd" style="left:683px;top:353px;color:#bababa"> src</div><div class="a t cd" style="left:715px;top:353px;color:#a5c261">=&quot;&quot;</div><div class="a t cd" style="left:739px;top:353px;color:#bababa"> onclick</div><div class="a t cd" style="left:803px;top:353px;color:#a5c261">=&quot;</div><div class="a t cd" style="left:819px;top:353px;color:#ffc66d">getCaptCha</div><div class="a t cd" style="left:899px;top:353px;color:#a9b7c6">()</div><div class="a t cd" style="left:915px;top:353px;color:#a5c261">&quot;</div><div class="a t cd" style="left:923px;top:353px;color:#e8bf6a">&gt;</div><div class="a t cd" style="left:931px;top:353px;color:#e8bf6a"> &lt;a</div><div class="a t cd" style="left:955px;top:353px;color:#bababa"> id</div><div class="a t cd" style="left:979px;top:353px;color:#a5c261">=&quot;kanbuq&quot;</div><div class="a t cd" style="left:1051px;top:353px;color:#bababa"> onclick</div><div class="a t cd" style="left:1115px;top:353px;color:#a5c261">=&quot;</div><div class="a t cd" style="left:1131px;top:353px;color:#ffc66d">getCaptCha</div><div class="a t cd" style="left:1211px;top:353px;color:#a9b7c6">()</div><div class="a t cd" style="left:1227px;top:353px;color:#a5c261">&quot;</div><div class="a t cd" style="left:387px;top:375px;color:#bababa">href</div><div class="a t cd" style="left:419px;top:375px;color:#a5c261">=&quot;javascript:</div><div class="a t cd" style="left:523px;top:375px;color:#cc7832">;</div><div class="a t cd" style="left:531px;top:375px;color:#a5c261">&quot;</div><div class="a t cd" style="left:539px;top:375px;color:#e8bf6a">&gt;</div><div class="a t cj" style="left:547px;top:375px;color:#a9b7c6">看不清，换一张</div><div class="a t cd" style="left:638px;top:375px;color:#e8bf6a">&lt;/a&gt;</div><div class="a t cd" style="left:670px;top:375px;color:#e8bf6a"> &lt;/div&gt;</div><div class="a t cd" style="left:475px;top:397px;color:#e8bf6a">&lt;/div&gt;</div><div class="a t cd" style="left:475px;top:463px;color:#e8bf6a">&lt;div</div><div class="a t cd" style="left:507px;top:463px;color:#bababa"> class</div><div class="a t cd" style="left:555px;top:463px;color:#a5c261">=&quot;row cl&quot;</div><div class="a t cd" style="left:627px;top:463px;color:#e8bf6a">&gt;</div><div class="a t cd" style="left:507px;top:485px;color:#e8bf6a">&lt;div</div><div class="a t cd" style="left:539px;top:485px;color:#bababa"> class</div><div class="a t cd" style="left:587px;top:485px;color:#a5c261">=&quot;formControls col-xs-8 col-xs-offset-3&quot;</div><div class="a t cd" style="left:907px;top:485px;color:#e8bf6a">&gt;</div><div class="a t cd" style="left:539px;top:507px;color:#e8bf6a">&lt;label</div><div class="a t cd" style="left:587px;top:507px;color:#bababa"> for</div><div class="a t cd" style="left:619px;top:507px;color:#a5c261">=&quot;online&quot;</div><div class="a t cd" style="left:691px;top:507px;color:#e8bf6a">&gt;</div><div class="a t cd" style="left:571px;top:529px;color:#e8bf6a">&lt;input</div><div class="a t cd" style="left:619px;top:529px;color:#bababa"> type</div><div class="a t cd" style="left:659px;top:529px;color:#a5c261">=&quot;checkbox&quot;</div><div class="a t cd" style="left:747px;top:529px;color:#bababa"> name</div><div class="a t cd" style="left:787px;top:529px;color:#a5c261">=&quot;online&quot;</div><div class="a t cd" style="left:859px;top:529px;color:#bababa"> id</div><div class="a t cd" style="left:883px;top:529px;color:#a5c261">=&quot;online&quot;</div><div class="a t cd" style="left:955px;top:529px;color:#bababa"> value</div><div class="a t cd" style="left:1003px;top:529px;color:#a5c261">=&quot;&quot;</div><div class="a t cd" style="left:1027px;top:529px;color:#e8bf6a">&gt;</div><div class="a t cj" style="left:571px;top:551px;color:#a9b7c6">使我保持登录状态</div><div class="a t cd" style="left:675px;top:551px;color:#e8bf6a">&lt;/label&gt;</div><div class="a t cd" style="left:507px;top:573px;color:#e8bf6a">&lt;/div&gt;</div><div class="a t cd" style="left:475px;top:595px;color:#e8bf6a">&lt;/div&gt;</div><div class="a t ln" style="left:315px;width:19px;top:89px;color:#606366">32</div><div class="a t ln" style="left:315px;width:19px;top:111px;color:#606366">33</div><div class="a t ln" style="left:315px;width:19px;top:133px;color:#606366">34</div><div class="a t ln" style="left:315px;width:19px;top:155px;color:#606366">35</div><div class="a t ln" style="left:315px;width:19px;top:177px;color:#606366">36</div><div class="a t ln" style="left:315px;width:19px;top:199px;color:#606366">37</div><div class="a t ln" style="left:315px;width:19px;top:221px;color:#606366">38</div><div class="a t ln" style="left:315px;width:19px;top:243px;color:#606366">39</div><div class="a t ln" style="left:315px;width:19px;top:265px;color:#606366">40</div><div class="a t ln" style="left:315px;width:19px;top:287px;color:#606366">41</div><div class="a t ln" style="left:315px;width:19px;top:309px;color:#606366">42</div><div class="a t ln" style="left:315px;width:19px;top:353px;color:#606366">43</div><div class="a t ln" style="left:315px;width:19px;top:397px;color:#606366">44</div><div class="a t ln" style="left:315px;width:19px;top:419px;color:#a4a3a3">45</div><div class="a t ln" style="left:315px;width:19px;top:441px;color:#606366">46</div><div class="a t ln" style="left:315px;width:19px;top:463px;color:#606366">47</div><div class="a t ln" style="left:315px;width:19px;top:485px;color:#606366">48</div><div class="a t ln" style="left:315px;width:19px;top:507px;color:#606366">49</div><div class="a t ln" style="left:315px;width:19px;top:529px;color:#606366">50</div><div class="a t ln" style="left:315px;width:19px;top:551px;color:#606366">51</div><div class="a t ln" style="left:315px;width:19px;top:573px;color:#606366">52</div><div class="a t ln" style="left:315px;width:19px;top:595px;color:#606366">53</div><div class="a t ln" style="left:315px;width:19px;top:617px;color:#606366">54</div><div class="a t ln" style="left:315px;width:19px;top:639px;color:#606366">55</div><div class="a" style="left:362px;top:85px;width:2px;height:568px;background:#e39393;"></div><div class="a" style="left:364px;top:155px;width:9px;height:22px;background:#384c57;"></div><div class="a" style="left:364px;top:221px;width:9px;height:440px;background:#384c57;"></div><div class="a" style="left:373px;top:85px;width:1px;height:568px;background:#555759;"></div><svg class="a" style="left:369px;top:93px;" width="9" height="12" viewBox="0 0 9 12"><path d="M0.5 0.5H8.5V7L4.5 11L0.5 7Z" fill="#313335" stroke="#77797b" stroke-width="1"/><path d="M2.5 4.5H6.5" stroke="#77797b" stroke-width="1"/></svg><svg class="a" style="left:369px;top:137px;" width="9" height="12" viewBox="0 0 9 12"><path d="M0.5 0.5H8.5V7L4.5 11L0.5 7Z" fill="#313335" stroke="#77797b" stroke-width="1"/><path d="M2.5 4.5H6.5" stroke="#77797b" stroke-width="1"/></svg><svg class="a" style="left:369px;top:269px;" width="9" height="12" viewBox="0 0 9 12"><path d="M0.5 0.5H8.5V7L4.5 11L0.5 7Z" fill="#313335" stroke="#77797b" stroke-width="1"/><path d="M2.5 4.5H6.5" stroke="#77797b" stroke-width="1"/></svg><svg class="a" style="left:369px;top:291px;" width="9" height="12" viewBox="0 0 9 12"><path d="M0.5 0.5H8.5V7L4.5 11L0.5 7Z" fill="#313335" stroke="#77797b" stroke-width="1"/><path d="M2.5 4.5H6.5" stroke="#77797b" stroke-width="1"/></svg><svg class="a" style="left:369px;top:467px;" width="9" height="12" viewBox="0 0 9 12"><path d="M0.5 0.5H8.5V7L4.5 11L0.5 7Z" fill="#313335" stroke="#77797b" stroke-width="1"/><path d="M2.5 4.5H6.5" stroke="#77797b" stroke-width="1"/></svg><svg class="a" style="left:369px;top:489px;" width="9" height="12" viewBox="0 0 9 12"><path d="M0.5 0.5H8.5V7L4.5 11L0.5 7Z" fill="#313335" stroke="#77797b" stroke-width="1"/><path d="M2.5 4.5H6.5" stroke="#77797b" stroke-width="1"/></svg><svg class="a" style="left:369px;top:511px;" width="9" height="12" viewBox="0 0 9 12"><path d="M0.5 0.5H8.5V7L4.5 11L0.5 7Z" fill="#313335" stroke="#77797b" stroke-width="1"/><path d="M2.5 4.5H6.5" stroke="#77797b" stroke-width="1"/></svg><svg class="a" style="left:369px;top:181px;" width="9" height="12" viewBox="0 0 9 12"><path d="M0.5 11.5H8.5V5L4.5 1L0.5 5Z" fill="#313335" stroke="#77797b" stroke-width="1"/><path d="M2.5 7.5H6.5" stroke="#77797b" stroke-width="1"/></svg><svg class="a" style="left:369px;top:203px;" width="9" height="12" viewBox="0 0 9 12"><path d="M0.5 11.5H8.5V5L4.5 1L0.5 5Z" fill="#313335" stroke="#77797b" stroke-width="1"/><path d="M2.5 7.5H6.5" stroke="#77797b" stroke-width="1"/></svg><svg class="a" style="left:369px;top:379px;" width="9" height="12" viewBox="0 0 9 12"><path d="M0.5 11.5H8.5V5L4.5 1L0.5 5Z" fill="#313335" stroke="#77797b" stroke-width="1"/><path d="M2.5 7.5H6.5" stroke="#77797b" stroke-width="1"/></svg><svg class="a" style="left:369px;top:401px;" width="9" height="12" viewBox="0 0 9 12"><path d="M0.5 11.5H8.5V5L4.5 1L0.5 5Z" fill="#313335" stroke="#77797b" stroke-width="1"/><path d="M2.5 7.5H6.5" stroke="#77797b" stroke-width="1"/></svg><svg class="a" style="left:369px;top:555px;" width="9" height="12" viewBox="0 0 9 12"><path d="M0.5 11.5H8.5V5L4.5 1L0.5 5Z" fill="#313335" stroke="#77797b" stroke-width="1"/><path d="M2.5 7.5H6.5" stroke="#77797b" stroke-width="1"/></svg><svg class="a" style="left:369px;top:577px;" width="9" height="12" viewBox="0 0 9 12"><path d="M0.5 11.5H8.5V5L4.5 1L0.5 5Z" fill="#313335" stroke="#77797b" stroke-width="1"/><path d="M2.5 7.5H6.5" stroke="#77797b" stroke-width="1"/></svg><svg class="a" style="left:369px;top:599px;" width="9" height="12" viewBox="0 0 9 12"><path d="M0.5 11.5H8.5V5L4.5 1L0.5 5Z" fill="#313335" stroke="#77797b" stroke-width="1"/><path d="M2.5 7.5H6.5" stroke="#77797b" stroke-width="1"/></svg><div class="a" style="left:410px;top:89px;width:1px;height:572px;background:#373737;"></div><div class="a" style="left:442px;top:89px;width:1px;height:572px;background:#373737;"></div><div class="a" style="left:474px;top:111px;width:1px;height:88px;background:#373737;"></div><div class="a" style="left:506px;top:155px;width:1px;height:22px;background:#373737;"></div><div class="a" style="left:474px;top:287px;width:1px;height:110px;background:#373737;"></div><div class="a" style="left:506px;top:309px;width:1px;height:44px;background:#373737;"></div><div class="a" style="left:474px;top:485px;width:1px;height:110px;background:#373737;"></div><div class="a" style="left:506px;top:507px;width:1px;height:66px;background:#373737;"></div><div class="a" style="left:538px;top:529px;width:1px;height:44px;background:#373737;"></div><div class="a" style="left:379px;top:421px;width:2px;height:19px;background:#bbbbbb;"></div><div class="a" style="left:1322px;top:116px;width:14px;height:2px;background:#d9a51c;"></div><div class="a" style="left:1322px;top:142px;width:14px;height:2px;background:#d9a51c;"></div><div class="a" style="left:1322px;top:147px;width:14px;height:2px;background:#d9a51c;"></div><div class="a" style="left:1322px;top:152px;width:14px;height:2px;background:#d9a51c;"></div><div class="a" style="left:1322px;top:157px;width:14px;height:2px;background:#d9a51c;"></div><div class="a" style="left:1322px;top:163px;width:14px;height:2px;background:#d9a51c;"></div><div class="a" style="left:1322px;top:267px;width:14px;height:2px;background:#d9a51c;"></div><div class="a" style="left:1322px;top:299px;width:14px;height:2px;background:#d9a51c;"></div><div class="a" style="left:1322px;top:345px;width:14px;height:2px;background:#d9a51c;"></div><div class="a" style="left:1322px;top:351px;width:14px;height:2px;background:#d9a51c;"></div><div class="a" style="left:1322px;top:486px;width:14px;height:2px;background:#d9a51c;"></div><div class="a" style="left:1322px;top:491px;width:14px;height:2px;background:#d9a51c;"></div><div class="a" style="left:1322px;top:335px;width:14px;height:7px;background:#d9a51c;"></div><div class="a" style="left:1322px;top:543px;width:14px;height:2px;background:#7d7659;"></div><div class="a" style="left:1318px;top:240px;width:2px;height:11px;background:#4e8354;"></div><div class="a" style="left:1318px;top:266px;width:2px;height:6px;background:#45709c;"></div><div class="a" style="left:1318px;top:297px;width:2px;height:6px;background:#45709c;"></div><div class="a" style="left:1318px;top:314px;width:2px;height:104px;background:#45709c;"></div><div class="a" style="left:1318px;top:496px;width:2px;height:110px;background:#4e8354;"></div><svg class="a" style="left:1199px;top:91px;" width="14" height="13" viewBox="0 0 14 13"><path d="M7 0.5L13.5 12.5H0.5Z" fill="#d9a51c"/><path d="M7 4.5V8.5M7 10V11.5" stroke="#2b2b2b" stroke-width="1.6"/></svg><div class="a t" style="left:1214px;top:90.50px;line-height:16px;font-size:13px;color:#a9b7c6;font-weight:normal;font-family:"Liberation Sans", sans-serif;">39</div><svg class="a" style="left:1237px;top:91px;" width="14" height="13" viewBox="0 0 14 13"><path d="M7 0.5L13.5 12.5H0.5Z" fill="#8a8166"/><path d="M7 4.5V8.5M7 10V11.5" stroke="#2b2b2b" stroke-width="1.6"/></svg><div class="a t" style="left:1252px;top:90.50px;line-height:16px;font-size:13px;color:#6897bb;font-weight:normal;font-family:"Liberation Sans", sans-serif;">1</div><svg class="a" style="left:1265px;top:92px;" width="12" height="13" viewBox="0 0 12 13"><path d="M1 6L4.5 9.5L11 1.5" fill="none" stroke="#499c54" stroke-width="2"/><path d="M0 11.5L2 10L4 12L6 10L8 12L10 10" fill="none" stroke="#499c54" stroke-width="1"/></svg><div class="a t" style="left:1281px;top:90.50px;line-height:16px;font-size:13px;color:#a9b7c6;font-weight:normal;font-family:"Liberation Sans", sans-serif;">3</div><svg class="a" style="left:1299px;top:95px;" width="9" height="6" viewBox="0 0 9 6"><path d="M0.5 5.5L4.5 1L8.5 5.5" fill="none" stroke="#afb1b3" stroke-width="1.4"/></svg><svg class="a" style="left:1320px;top:95px;" width="9" height="6" viewBox="0 0 9 6"><path d="M0.5 0.5L4.5 5L8.5 0.5" fill="none" stroke="#afb1b3" stroke-width="1.4"/></svg><div class="a" style="left:408px;top:236px;width:915px;height:231px;border:3px solid #f5231b;border-radius:3px"></div><div class="a" style="left:745px;top:346px;width:178px;height:29px;border:3px solid #f5231b;border-radius:3px"></div><div class="a" style="left:1055px;top:346px;width:172px;height:29px;border:3px solid #f5231b;border-radius:3px"></div><div class="a" style="left:315px;top:653px;width:1021px;height:25px;background:#313335;"></div><div class="a" style="left:315px;top:653px;width:1021px;height:1px;background:#3a3c3e;"></div><div class="a t" style="left:383.5px;top:657.50px;line-height:16px;font-size:13px;color:#6897bb;font-weight:normal;font-family:"Liberation Sans", sans-serif;">html</div><div class="a t" style="left:432.5px;top:657.50px;line-height:16px;font-size:13px;color:#56a8bd;font-weight:normal;font-family:"Liberation Sans", sans-serif;">body</div><div class="a t" style="left:486.5px;top:657.50px;line-height:16px;font-size:13px;color:#5b9e4c;font-weight:normal;font-family:"Liberation Sans", sans-serif;">div.loginWraper</div><div class="a t" style="left:603.5px;top:657.50px;line-height:16px;font-size:13px;color:#9ea54c;font-weight:normal;font-family:"Liberation Sans", sans-serif;">div#loginform.loginBox</div><div class="a t" style="left:763.3px;top:657.50px;line-height:16px;font-size:13px;color:#c75450;font-weight:normal;font-family:"Liberation Sans", sans-serif;">form.form.form-horizontal</div><svg class="a" style="left:420px;top:661px;" width="5" height="9" viewBox="0 0 5 9"><path d="M0.5 0.5L4 4.5L0.5 8.5" fill="none" stroke="#5e6164" stroke-width="1"/></svg><svg class="a" style="left:473px;top:661px;" width="5" height="9" viewBox="0 0 5 9"><path d="M0.5 0.5L4 4.5L0.5 8.5" fill="none" stroke="#5e6164" stroke-width="1"/></svg><svg class="a" style="left:591px;top:661px;" width="5" height="9" viewBox="0 0 5 9"><path d="M0.5 0.5L4 4.5L0.5 8.5" fill="none" stroke="#5e6164" stroke-width="1"/></svg><svg class="a" style="left:751px;top:661px;" width="5" height="9" viewBox="0 0 5 9"><path d="M0.5 0.5L4 4.5L0.5 8.5" fill="none" stroke="#5e6164" stroke-width="1"/></svg><div class="a" style="left:8px;top:677px;width:1350px;height:1px;background:#323232;"></div><div class="a" style="left:8px;top:678px;width:1350px;height:21px;background:#3c3f41;"></div><div class="a" style="left:8px;top:699px;width:1350px;height:1px;background:#4b4e50;"></div><div class="a" style="left:8px;top:700px;width:1350px;height:20px;background:#3c3f41;"></div><svg class="a" style="left:39px;top:684px;" width="12" height="12" viewBox="0 0 12 12"><path d="M1.5 4V11M1.5 7.5H7V3" fill="none" stroke="#afb1b3" stroke-width="2"/><path d="M3.8 4.2L7 0.5L10.2 4.2Z" fill="#afb1b3"/></svg><div class="a t" style="left:55px;top:682.43px;line-height:15px;font-size:11.74px;color:#bbbbbb;font-weight:normal;font-family:"Liberation Sans", sans-serif;">Git</div><svg class="a" style="left:90px;top:684px;" width="9" height="11" viewBox="0 0 9 11"><path d="M0 0L9 5.5L0 11Z" fill="#afb1b3"/></svg><div class="a t" style="left:105px;top:683.03px;line-height:14px;font-size:11.45px;color:#bbbbbb;font-weight:normal;font-family:"Liberation Sans", sans-serif;">Run</div><svg class="a" style="left:147px;top:684px;" width="11" height="10" viewBox="0 0 11 10"><path d="M0 1H2M0 4.5H2M0 8H2M3.5 1H11M3.5 4.5H11M3.5 8H11" stroke="#afb1b3" stroke-width="1.6"/></svg><div class="a t" style="left:162px;top:683.14px;line-height:14px;font-size:11.15px;color:#bbbbbb;font-weight:normal;font-family:"Liberation Sans", sans-serif;">TODO</div><svg class="a" style="left:215px;top:684px;" width="11" height="11" viewBox="0 0 11 11"><circle cx="5.5" cy="5.5" r="5.5" fill="#afb1b3"/><path d="M5.5 2.5V6.5M5.5 7.8V9" stroke="#3c3f41" stroke-width="1.8"/></svg><div class="a t" style="left:231.7px;top:683.04px;line-height:14px;font-size:11.44px;color:#bbbbbb;font-weight:normal;font-family:"Liberation Sans", sans-serif;">Problems</div><svg class="a" style="left:302px;top:684px;" width="12" height="11" viewBox="0 0 12 11"><rect x="0" y="0" width="12" height="11" fill="#afb1b3"/><path d="M2 2.5L4.5 4.5L2 6.5M5 8.5H9.5" fill="none" stroke="#3c3f41" stroke-width="1.2"/></svg><div class="a t" style="left:318.5px;top:682.42px;line-height:15px;font-size:11.78px;color:#bbbbbb;font-weight:normal;font-family:"Liberation Sans", sans-serif;">Terminal</div><svg class="a" style="left:1257px;top:683px;" width="14" height="14" viewBox="0 0 14 14"><path d="M7 1A6 6 0 1 0 7 13H13V7A6 6 0 0 0 7 1Z" fill="none" stroke="#afb1b3" stroke-width="1.4"/></svg><div class="a t" style="left:1274px;top:683.07px;line-height:14px;font-size:11.33px;color:#bbbbbb;font-weight:normal;font-family:"Liberation Sans", sans-serif;">Event Log</div><svg class="a" style="left:14px;top:704px;" width="13" height="13" viewBox="0 0 13 13"><rect x="3.5" y="0.5" width="9" height="9" fill="none" stroke="#afb1b3" stroke-width="1"/><path d="M0.5 3V12.5H10" fill="none" stroke="#afb1b3" stroke-width="1"/></svg><div class="a t" style="left:996px;top:703.02px;line-height:14px;font-size:11.49px;color:#bbbbbb;font-weight:normal;font-family:"Liberation Sans", sans-serif;">PHP: 7.3</div><div class="a t" style="left:1055px;top:702.98px;line-height:14px;font-size:11.6px;color:#bbbbbb;font-weight:normal;font-family:"Liberation Sans", sans-serif;">45:1</div><div class="a t" style="left:1091px;top:702.98px;line-height:14px;font-size:11.6px;color:#bbbbbb;font-weight:normal;font-family:"Liberation Sans", sans-serif;">LF</div><div class="a t" style="left:1115px;top:702.22px;line-height:15px;font-size:12.36px;color:#bbbbbb;font-weight:normal;font-family:"Liberation Sans", sans-serif;">UTF-8</div><div class="a" style="left:0;top:720px;width:1366px;height:8px;overflow:hidden"><div class="a t" style="left:17.5px;top:-8px;font-size:10.4px;line-height:14px;color:#555">行数: 100    列数: 121</div></div><div class="a" style="left:1355px;top:320px;width:6px;height:58px;border:1px solid #e0e0e0;border-radius:4px;background:linear-gradient(#6a6a6a 0,#6a6a6a 21%,#21c26a 23%,#2cc56c 60%,#5ee46a 100%)"></div><div class="a" style="left:1150px;top:702px;width:211px;height:26px;background:#ffffff;border:1px solid #b9cde6;box-sizing:border-box"></div><svg class="a" style="left:1139px;top:697px;" width="34" height="31" viewBox="0 0 34 31"><g transform="rotate(-16 17 16)"><rect x="3" y="3" width="28" height="27" rx="5" fill="#f05a1e"/></g><path d="M25.5 9.8C21 8.3 11 8.6 10 12.5C9 16.5 27 14.5 27 19.5C27 24 16 25.5 12 24" fill="none" stroke="#fff" stroke-width="4.4" stroke-linecap="round"/></svg><svg class="a" style="left:1177px;top:708px;" width="16" height="15" viewBox="0 0 16 15"><rect x="1.2" y="3.5" width="13.6" height="7.5" rx="2" fill="none" stroke="#1f6fe0" stroke-width="2.2"/><path d="M8 0V15" stroke="#1f6fe0" stroke-width="2.4"/></svg><svg class="a" style="left:1203px;top:709px;" width="13" height="12" viewBox="0 0 13 12"><circle cx="3" cy="3" r="2" fill="none" stroke="#1f6fe0" stroke-width="1.3"/><path d="M10 6C11 7 11 10 8.5 11.5" fill="none" stroke="#1f6fe0" stroke-width="2.2" stroke-linecap="round"/></svg><svg class="a" style="left:1226px;top:707px;" width="15" height="15" viewBox="0 0 15 15"><circle cx="7.5" cy="7.5" r="7.5" fill="#1f6fe0"/><circle cx="5" cy="5.8" r="1.2" fill="#fff"/><circle cx="10" cy="5.8" r="1.2" fill="#fff"/><path d="M4 8.5Q7.5 12.5 11 8.5Z" fill="#fff"/></svg><svg class="a" style="left:1251px;top:706px;" width="14" height="17" viewBox="0 0 14 17"><rect x="4" y="0" width="6" height="10" rx="3" fill="#1f6fe0"/><path d="M1.5 7C1.5 11 4 13 7 13C10 13 12.5 11 12.5 7" fill="none" stroke="#1f6fe0" stroke-width="1.5"/><path d="M7 13V16" stroke="#1f6fe0" stroke-width="1.5"/></svg><svg class="a" style="left:1274px;top:708px;" width="16" height="12" viewBox="0 0 16 12"><rect x="0" y="0" width="16" height="12" rx="2" fill="#1f6fe0"/><path d="M2.5 3.5H13.5M2.5 6H13.5M4 8.8H12" stroke="#fff" stroke-width="1.2" stroke-dasharray="1.5 1"/></svg><svg class="a" style="left:1299px;top:705px;" width="19" height="18" viewBox="0 0 19 18"><circle cx="8" cy="4.5" r="4" fill="#1f6fe0"/><path d="M0.5 16C0.5 10 4 9 8 9C12 9 15.5 10 15.5 16Z" fill="#1f6fe0"/><rect x="8" y="10" width="11" height="8" fill="#1f6fe0"/><text x="9" y="17" font-family="Liberation Sans" font-weight="bold" font-size="7.5" fill="#fff">19</text></svg><svg class="a" style="left:1323px;top:706px;" width="16" height="16" viewBox="0 0 16 16"><path d="M3 0H13L16 4L13 6V16H3V6L0 4Z" fill="#1f6fe0"/></svg><svg class="a" style="left:1347px;top:707px;" width="14" height="14" viewBox="0 0 14 14"><rect x="0" y="0" width="6" height="6" rx="1" fill="#1f6fe0"/><rect x="8" y="0" width="6" height="6" rx="3" fill="#1f6fe0"/><rect x="0" y="8" width="6" height="6" rx="1" fill="#1f6fe0"/><rect x="8" y="8" width="6" height="6" rx="1" fill="#1f6fe0"/></svg><div class="a t" style="left:1254px;top:698px;font-size:13.6px;line-height:18px;font-weight:bold;color:#e8e8e8;text-shadow:1px 0 0 #222,-1px 0 0 #222,0 1px 0 #222,0 -1px 0 #222,1px 1px 0 #222,-1px -1px 0 #222">@掘金技术社区</div><svg class="a" style="left:995px;top:370px;" width="48" height="4" viewBox="0 0 48 4"><path d="M0 3.5L2 0.5L4 3.5L6 0.5L8 3.5L10 0.5L12 3.5L14 0.5L16 3.5L18 0.5L20 3.5L22 0.5L24 3.5L26 0.5L28 3.5L30 0.5L32 3.5L34 0.5L36 3.5L38 0.5L40 3.5L42 0.5L44 3.5L46 0.5L48 3.5" fill="none" stroke="#5f9a56" stroke-width="1"/></svg><div class="a" style="left:1329px;top:283px;width:7px;height:132px;background:rgba(255,255,255,0.16);"></div>
</body></html>
